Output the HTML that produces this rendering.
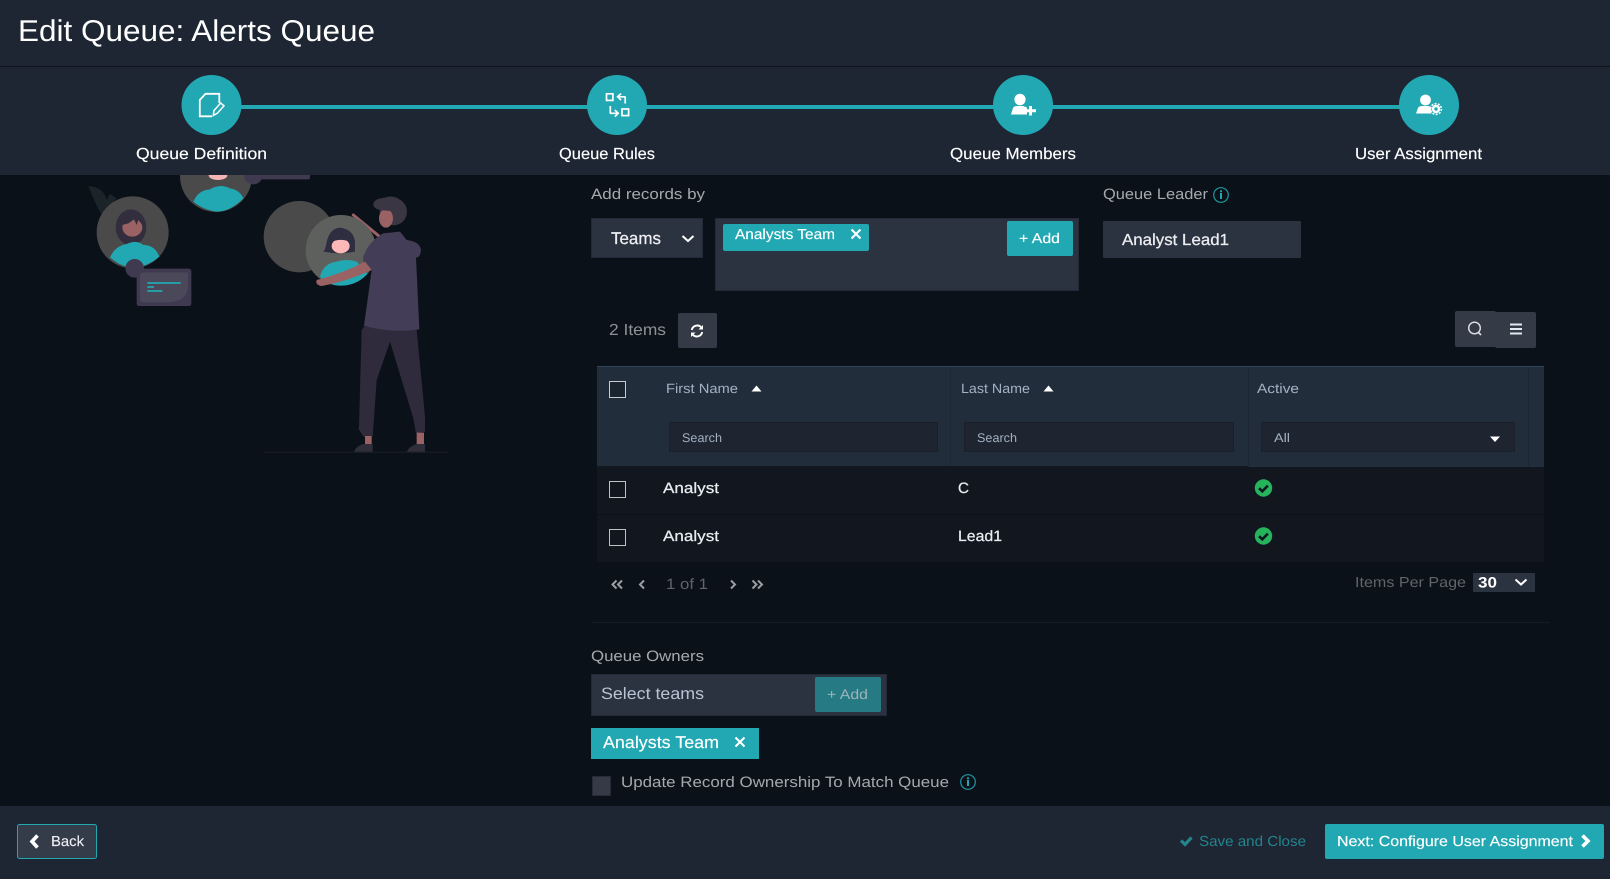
<!DOCTYPE html>
<html lang="en"><head><meta charset="utf-8"><title>Edit Queue: Alerts Queue</title>
<style>
html,body{margin:0;padding:0;background:#0b1119;width:1610px;height:879px;overflow:hidden}
svg{display:block}
text{font-family:"Liberation Sans",sans-serif;white-space:pre}
.t{text-rendering:geometricPrecision}
.m{stroke:currentColor;stroke-width:.25px}
.s{stroke:currentColor;stroke-width:.15px}
</style></head><body>
<svg xmlns="http://www.w3.org/2000/svg" width="1610" height="879" viewBox="0 0 1610 879">
<defs>
<g id="x"><path d="M-4.5-4.5L4.5 4.5M4.5-4.5L-4.5 4.5" stroke="#fff" stroke-width="2" fill="none"/></g>
<g id="ck"><circle r="8.7" fill="#25b35c"/><path d="M-4.4 0.2L-1.2 3.3L4.4-2.4" stroke="#10161f" stroke-width="2.6" fill="none"/></g>
<g id="inf"><circle r="7.3" fill="none" stroke="#1f97a1" stroke-width="1.2"/><rect x="-1" y="-2" width="2" height="6" fill="#22a8b2"/><rect x="-1" y="-4.6" width="2" height="1.8" fill="#22a8b2"/></g>
<clipPath id="c2"><circle cx="843" cy="241" r="106"/></clipPath>
</defs>
<rect width="1610" height="879" fill="#0b1119"/>

<!-- illustration -->
<g transform="translate(60 170) scale(.33333)">
<path d="M85 48Q130 50 140 90L150 72L170 85L125 135Q100 90 85 48Z" fill="#1b2429"/>
<circle cx="218" cy="187" r="108" fill="#4a4a4a"/>
<ellipse cx="213" cy="172" rx="46" ry="54" fill="#322e3e"/>
<ellipse cx="217" cy="172" rx="30" ry="28" fill="#9a6263"/>
<path d="M187 165Q195 130 215 132Q240 130 247 165L235 150L230 165L222 148L205 160Z" fill="#322e3e"/>
<path d="M150 262Q165 228 200 222Q230 208 250 225Q285 225 298 260Q270 285 225 295Q180 290 150 262Z" fill="#22a8b2"/>
<circle cx="224" cy="295" r="28" fill="#3f3a50"/>
<rect x="230" y="296" width="164" height="112" rx="8" fill="#3f3a50"/>
<path d="M240 318Q240 307 252 307H384V350Q380 397 320 397H252Q240 397 240 385Z" fill="#4b4859"/>
<path d="M262 339H362M262 351H282M262 363H307" stroke="#22a8b2" stroke-width="5" fill="none"/>
<circle cx="468" cy="18" r="108" fill="#4a4a4a"/>
<ellipse cx="474" cy="16" rx="28" ry="14" fill="#f4b5b5"/>
<path d="M400 95Q415 60 450 58Q480 40 510 55Q540 60 550 85Q510 125 470 125Q430 120 400 95Z" fill="#22a8b2"/>
<circle cx="580" cy="15" r="28" fill="#3f3a50"/>
<rect x="580" y="0" width="170" height="28" rx="6" fill="#3f3a50"/>
<circle cx="718" cy="200" r="107" fill="#4a4a4a"/>
<path d="M880 135L965 205" stroke="#9a6263" stroke-width="9" fill="none" stroke-linecap="round"/>
<circle cx="843" cy="241" r="106" fill="#5e605e"/>
<path d="M790 245Q797 238 800 215Q810 175 840 173Q880 178 885 215V245Q840 255 790 245Z" fill="#2f2e41"/>
<ellipse cx="842" cy="228" rx="27" ry="22" fill="#ffb8b8"/>
<path d="M812 217Q842 202 874 217V190H812Z" fill="#2f2e41"/>
<g clip-path="url(#c2)"><path d="M780 320Q790 280 830 275Q860 265 890 275L930 320Q880 350 845 350Q800 345 780 320Z" fill="#22a8b2"/></g>
<circle cx="1000" cy="125" r="41" fill="#3a3644"/>
<ellipse cx="978" cy="145" rx="21" ry="28" fill="#9a6263"/>
<path d="M940 100Q945 85 975 83Q995 75 1015 85L1010 125Q985 122 960 120Q938 115 940 100Z" fill="#3a3644"/>
<path d="M912 470L905 480L897 770L895 775L910 800H938L950 630L990 515L1060 745L1068 790L1095 785V740L1070 480Z" fill="#2f2b3d"/>
<path d="M970 190L1020 185L1040 210Q1080 215 1083 240Q1080 265 1068 262L1078 478Q1000 490 912 468L935 300Q905 285 910 260Q925 215 970 190Z" fill="#443d58"/>
<path d="M770 330Q850 310 915 275L935 300Q860 335 785 348Q765 345 770 330Z" fill="#9a6263"/>
<path d="M915 798H935V825H915ZM1070 788H1092V825H1070Z" fill="#9a6263"/>
<path d="M882 848Q885 830 910 822H938V848ZM1040 848Q1045 830 1070 822H1095V848Z" fill="#2f2e3a"/>
<path d="M610 846.5H1165" stroke="#1c2029" stroke-width="3"/>
</g>

<!-- header & stepper -->
<rect width="1610" height="175" fill="#1e2533"/>
<rect y="66" width="1610" height="1" fill="#0e1219"/>
<text class="t" x="18" y="41" font-size="30" fill="#fff" textLength="357" lengthAdjust="spacingAndGlyphs">Edit Queue: Alerts Queue</text>
<rect x="212" y="105" width="1217" height="4" fill="#22a8b2"/>
<circle cx="211.5" cy="105" r="30" fill="#22a8b2"/>
<circle cx="617" cy="105" r="30" fill="#22a8b2"/>
<circle cx="1023" cy="105" r="30" fill="#22a8b2"/>
<circle cx="1429" cy="105" r="30" fill="#22a8b2"/>
<!-- file edit -->
<path d="M219.3 103V93.8H205.5L199.8 100V116.3H212" fill="none" stroke="#fff" stroke-width="1.8"/>
<path d="M213.3 115.5L214 110.5L220.7 103L224 105.8L217.4 113.2Z" fill="none" stroke="#fff" stroke-width="1.5"/>
<!-- rules -->
<g fill="none" stroke="#fff" stroke-width="1.7">
<rect x="606.5" y="93.8" width="6.4" height="6.6"/><rect x="622" y="109" width="6.6" height="6.6"/>
<path d="M625.2 103.5V97.5Q625.2 96.8 624.5 96.8H618M621 93.6L617.6 96.8L621 100"/>
<path d="M610.3 106V112.6Q610.3 113.3 611 113.3H618M614.8 110L618.2 113.3L614.8 116.6"/>
</g>
<!-- user plus -->
<g fill="#fff"><ellipse cx="1020" cy="99.5" rx="5.6" ry="5.8"/><path d="M1011 114.5L1013 108Q1014 106 1017 106H1023L1027 107.5V114.5Z"/>
<path d="M1029 106H1032V109.2H1036V112.2H1032V115.5H1029V112.2H1025V109.2H1029Z"/>
<ellipse cx="1425.5" cy="100" rx="5.4" ry="5.4"/><path d="M1416 113.5L1418 108Q1419 106 1422 106H1428L1431.5 107V113.5Z"/>
<circle cx="1436" cy="109" r="4.6" stroke="#22a8b2" stroke-width=".8"/><circle cx="1436" cy="109" r="5.4" fill="none" stroke="#fff" stroke-width="1.6" stroke-dasharray="2 1.4"/><circle cx="1436" cy="109" r="1.7" fill="#22a8b2"/></g>
<text class="t s" color="#fff" x="136" y="159" font-size="16" fill="#fff" textLength="131" lengthAdjust="spacingAndGlyphs">Queue Definition</text>
<text class="t s" color="#fff" x="559" y="159" font-size="16" fill="#fff" textLength="96" lengthAdjust="spacingAndGlyphs">Queue Rules</text>
<text class="t s" color="#fff" x="950" y="159" font-size="16" fill="#fff" textLength="126" lengthAdjust="spacingAndGlyphs">Queue Members</text>
<text class="t s" color="#fff" x="1355" y="159" font-size="16" fill="#fff" textLength="127" lengthAdjust="spacingAndGlyphs">User Assignment</text>

<!-- add records -->
<text class="t" x="591" y="199" font-size="15" fill="#a5a9ae" textLength="114" lengthAdjust="spacingAndGlyphs">Add records by</text>
<rect x="591.5" y="218.5" width="111" height="39" fill="#2c3340" stroke="#232936"/>
<text class="t m" x="611" y="244" font-size="17" fill="#eceef1" color="#eceef1" textLength="50" lengthAdjust="spacingAndGlyphs">Teams</text>
<path d="M682.5 236L688 241L693.5 236" fill="none" stroke="#fff" stroke-width="2"/>
<rect x="715.5" y="218.5" width="363" height="72" fill="#2c3340" stroke="#232936"/>
<rect x="723" y="224" width="146" height="27" rx="2" fill="#22a8b2"/>
<text class="t s" color="#fff" x="735" y="239" font-size="14.5" fill="#fff" textLength="100" lengthAdjust="spacingAndGlyphs">Analysts Team</text>
<use href="#x" x="856" y="234"/>
<rect x="1007" y="221" width="66" height="35" rx="2" fill="#22a8b2"/>
<text class="t s" color="#fff" x="1019" y="243" font-size="14" fill="#fff" textLength="41" lengthAdjust="spacingAndGlyphs">+ Add</text>

<text class="t" x="1103" y="199" font-size="15" fill="#a5a9ae" textLength="105" lengthAdjust="spacingAndGlyphs">Queue Leader</text>
<use href="#inf" x="1221" y="195"/>
<rect x="1103" y="221" width="198" height="37" rx="1" fill="#2c3340"/>
<text class="t m" x="1122" y="245" font-size="16" fill="#eceef1" color="#eceef1" textLength="107" lengthAdjust="spacingAndGlyphs">Analyst Lead1</text>

<text class="t" x="609" y="335" font-size="16" fill="#8d9197" textLength="57" lengthAdjust="spacingAndGlyphs">2 Items</text>
<rect x="678" y="313" width="39" height="35" rx="2" fill="#343a46"/>
<g fill="none" stroke="#fff" stroke-width="1.9"><path d="M691.8 330A5.4 5.4 0 0 1 701.5 327.8"/><path d="M702.2 332A5.4 5.4 0 0 1 692.5 334.2"/></g>
<path d="M703 325V329.5H698.5ZM691 337V332.5H695.5Z" fill="#fff"/>
<rect x="1455" y="311" width="41" height="36" rx="2" fill="#343a46"/>
<rect x="1495" y="312" width="41" height="36" rx="2" fill="#343a46"/>
<circle cx="1474.5" cy="328" r="5.8" fill="none" stroke="#dfe3e8" stroke-width="1.4"/><path d="M1478.5 332.5L1481 335" stroke="#dfe3e8" stroke-width="1.6"/>
<path d="M1510 324.5H1522M1510 329H1522M1510 333.5H1522" stroke="#e2e8f0" stroke-width="2"/>

<!-- table -->
<rect x="597" y="366" width="947" height="101" fill="#212d3a"/>
<rect x="597" y="366" width="947" height="1" fill="#31445a"/>
<rect x="597" y="466" width="652" height="1" fill="#12171f"/>
<rect x="950" y="367" width="1" height="99" fill="#1c2733"/>
<rect x="1248" y="367" width="1" height="100" fill="#1c2733"/>
<rect x="1528" y="367" width="1" height="100" fill="#1c2733"/>
<rect x="597" y="467" width="947" height="95" fill="#11161f"/>
<rect x="597" y="514" width="947" height="1" fill="#0c1118"/>
<rect x="609.5" y="381.5" width="16" height="16" fill="#11161f" fill-opacity=".35" stroke="#c8ccd1" stroke-width="1"/>
<rect x="609.5" y="481.5" width="16" height="16" fill="none" stroke="#bfc3c8" stroke-width="1"/>
<rect x="609.5" y="529.5" width="16" height="16" fill="none" stroke="#bfc3c8" stroke-width="1"/>
<text class="t" x="666" y="393" font-size="13.5" fill="#a3b1c2" textLength="72" lengthAdjust="spacingAndGlyphs">First Name</text>
<path d="M751.5 391.5L756.5 385.5L761.5 391.5Z" fill="#fff"/>
<text class="t" x="961" y="393" font-size="13.5" fill="#a3b1c2" textLength="69" lengthAdjust="spacingAndGlyphs">Last Name</text>
<path d="M1043.5 391.5L1048.5 385.5L1053.5 391.5Z" fill="#fff"/>
<text class="t" x="1257" y="393" font-size="13.5" fill="#a3b1c2" textLength="42" lengthAdjust="spacingAndGlyphs">Active</text>
<rect x="669.5" y="422.5" width="268" height="29" fill="#1e2430" stroke="#192029"/>
<rect x="964.5" y="422.5" width="269" height="29" fill="#1e2430" stroke="#192029"/>
<rect x="1261.5" y="422.5" width="253" height="29" fill="#1e2430" stroke="#192029"/>
<text class="t" x="682" y="442" font-size="12.5" fill="#a3b1c2" textLength="40" lengthAdjust="spacingAndGlyphs">Search</text>
<text class="t" x="977" y="442" font-size="12.5" fill="#a3b1c2" textLength="40" lengthAdjust="spacingAndGlyphs">Search</text>
<text class="t" x="1274" y="442" font-size="12.5" fill="#a3b1c2" textLength="16" lengthAdjust="spacingAndGlyphs">All</text>
<path d="M1490 436.5H1500L1495 442Z" fill="#fff"/>
<text class="t m" x="663" y="493" font-size="15" fill="#e9ebee" color="#e9ebee" textLength="56" lengthAdjust="spacingAndGlyphs">Analyst</text>
<text class="t m" x="958" y="493" font-size="15" fill="#e9ebee" color="#e9ebee" textLength="11" lengthAdjust="spacingAndGlyphs">C</text>
<text class="t m" x="663" y="541" font-size="15" fill="#e9ebee" color="#e9ebee" textLength="56" lengthAdjust="spacingAndGlyphs">Analyst</text>
<text class="t m" x="958" y="541" font-size="15" fill="#e9ebee" color="#e9ebee" textLength="44" lengthAdjust="spacingAndGlyphs">Lead1</text>
<use href="#ck" x="1263.5" y="488"/>
<use href="#ck" x="1263.5" y="536"/>

<!-- pagination -->
<g fill="none" stroke="#9a9ea3" stroke-width="2">
<path d="M616.5 580.5L612.5 584.5L616.5 588.5M622 580.5L618 584.5L622 588.5"/>
<path d="M644 580.5L640 584.5L644 588.5"/>
<path d="M731 580.5L735 584.5L731 588.5"/>
<path d="M752.5 580.5L756.5 584.5L752.5 588.5M758 580.5L762 584.5L758 588.5"/>
</g>
<text class="t" x="666" y="589" font-size="15" fill="#5f6469" textLength="42" lengthAdjust="spacingAndGlyphs">1 of 1</text>
<text class="t" x="1355" y="587" font-size="14.5" fill="#5f6469" textLength="111" lengthAdjust="spacingAndGlyphs">Items Per Page</text>
<rect x="1473" y="573" width="62" height="19" fill="#2c3340"/>
<text class="t" x="1478" y="587.5" font-size="15" font-weight="700" fill="#fff" textLength="19" lengthAdjust="spacingAndGlyphs">30</text>
<path d="M1515.5 579.5L1521 584.5L1526.5 579.5" fill="none" stroke="#fff" stroke-width="2"/>
<rect x="591" y="622" width="959" height="1" fill="#161c25"/>

<!-- owners -->
<text class="t" x="591" y="661" font-size="15" fill="#a5a9ae" textLength="113" lengthAdjust="spacingAndGlyphs">Queue Owners</text>
<rect x="591.5" y="674.5" width="295" height="41" fill="#2c3340" stroke="#232936"/>
<text class="t" x="601" y="699" font-size="16.5" fill="#b9c4d2" textLength="103" lengthAdjust="spacingAndGlyphs">Select teams</text>
<rect x="815" y="677" width="66" height="35" rx="2" fill="#267a83"/>
<text class="t" x="827" y="699" font-size="14" fill="#9db4bb" textLength="41" lengthAdjust="spacingAndGlyphs">+ Add</text>
<rect x="591" y="728" width="168" height="31" fill="#22a8b2"/>
<text class="t s" color="#fff" x="603" y="748" font-size="17" fill="#fff" textLength="116" lengthAdjust="spacingAndGlyphs">Analysts Team</text>
<use href="#x" x="740" y="742"/>
<rect x="592.5" y="776.5" width="18" height="19" fill="#343a46" stroke="#262b35"/>
<text class="t" x="621" y="787" font-size="15" fill="#a5a9ae" textLength="328" lengthAdjust="spacingAndGlyphs">Update Record Ownership To Match Queue</text>
<use href="#inf" x="968" y="782"/>

<!-- footer -->
<rect y="806" width="1610" height="73" fill="#1e2533"/>
<rect x="17.5" y="824.5" width="79" height="34" rx="2" fill="#343b49" stroke="#22a8b2"/>
<path d="M37.5 835.5L32 841.5L37.5 847.5" fill="none" stroke="#fff" stroke-width="3.6"/>
<text class="t s" color="#eceef1" x="51" y="846" font-size="14.5" fill="#eceef1" textLength="33" lengthAdjust="spacingAndGlyphs">Back</text>
<path d="M1181 840.5L1185 844.5L1191.5 837.5" fill="none" stroke="#22858e" stroke-width="3.2"/>
<text class="t" x="1199" y="846" font-size="14.5" fill="#22858e" textLength="107" lengthAdjust="spacingAndGlyphs">Save and Close</text>
<rect x="1325" y="824" width="279" height="35" rx="2" fill="#22a8b2"/>
<text class="t s" color="#fff" x="1337" y="846" font-size="14.5" fill="#fff" textLength="236" lengthAdjust="spacingAndGlyphs">Next: Configure User Assignment</text>
<path d="M1582.5 835.5L1588 841L1582.5 846.5" fill="none" stroke="#fff" stroke-width="3.6"/>
</svg>
</body></html>
